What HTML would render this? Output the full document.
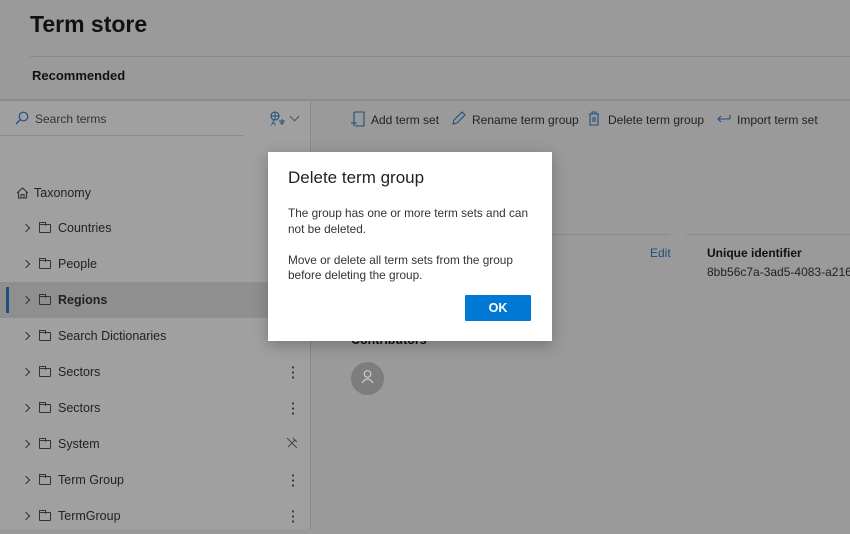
<!DOCTYPE html>
<html><head><style>
*{margin:0;padding:0;box-sizing:border-box}
body{width:850px;height:529px;overflow:hidden;background:#9a9a9a;font-family:"Liberation Sans",sans-serif;color:#1c1c1c;position:relative}
.a{position:absolute;white-space:nowrap}
.row{position:absolute;left:0;width:310px;height:36px;font-size:12.5px;color:#222}
.row .c{position:absolute;left:23px;top:15px;width:6px;height:6px;border-right:1.1px solid #333;border-top:1.1px solid #333;transform:rotate(45deg)}
.row .f{position:absolute;left:39px;top:14px;width:12px;height:9px;border:1.1px solid #333;border-radius:1px}
.row .f:before{content:"";position:absolute;left:-1px;top:-3px;width:5px;height:3px;border:1.1px solid #333;border-bottom:none}
.row .t{position:absolute;left:58px;top:11px}
.dots{position:absolute;left:292px;top:11px;width:2px;height:14px;background:radial-gradient(circle,#333 1px,transparent 1.2px) 0 0/2px 5px}
.tb{position:absolute;top:113px;font-size:12px;color:#222}
</style></head><body>
<div class="a" style="left:30px;top:11px;font-size:23px;font-weight:bold;color:#111">Term store</div>
<div class="a" style="left:30px;top:56px;width:820px;height:1px;background:#888"></div>
<div class="a" style="left:32px;top:68px;font-size:13px;font-weight:bold;color:#111">Recommended</div>
<div class="a" style="left:0;top:99px;width:850px;height:2px;background:#8c8c8c"></div>
<div class="a" style="left:0;top:101px;width:310px;height:428px;background:#a0a0a0"></div>
<div class="a" style="left:310px;top:101px;width:1px;height:428px;background:#8a8a8a"></div>
<svg class="a" style="left:15px;top:111px" width="14" height="14"><circle cx="8.5" cy="5.5" r="4.3" fill="none" stroke="#1e4f80" stroke-width="1.2"/><line x1="5.4" y1="8.6" x2="1" y2="13" stroke="#1e4f80" stroke-width="1.3"/></svg>
<div class="a" style="left:35px;top:112px;font-size:12px;color:#333">Search terms</div>
<svg class="a" style="left:270px;top:111px" width="16" height="15"><circle cx="5" cy="5" r="4" fill="none" stroke="#1e4f80" stroke-width="1.1"/><path d="M1 5 H9 M5 1 V9" stroke="#1e4f80" stroke-width="0.9"/><text x="1" y="14.5" font-size="7" font-family="Liberation Sans" fill="#1e4f80">A</text><path d="M9 10 H15 M12 8 V14 M10 12 H14" stroke="#1e4f80" stroke-width="1"/></svg>
<div class="a" style="left:291px;top:113px;width:7px;height:7px;border-right:1px solid #555;border-bottom:1px solid #555;transform:rotate(45deg)"></div>
<div class="a" style="left:0;top:135px;width:244px;height:1px;background:#8a8a8a"></div>
<svg class="a" style="left:16px;top:187px" width="13" height="12"><path d="M1 6 L6.5 1 L12 6 M2.5 5 V11 H10.5 V5 M5 11 V7.5 H8 V11" fill="none" stroke="#333" stroke-width="1.1"/></svg>
<div class="a" style="left:34px;top:186px;font-size:12.5px;color:#222">Taxonomy</div>
<div class="row" style="top:210px"><i class="c"></i><i class="f"></i><span class="t">Countries</span></div>
<div class="row" style="top:246px"><i class="c"></i><i class="f"></i><span class="t">People</span></div>
<div class="row" style="top:282px;background:#8f8f8f"><div style="position:absolute;left:6px;top:5px;width:3px;height:26px;background:#1e4f80"></div><i class="c"></i><i class="f"></i><span class="t" style="font-weight:bold">Regions</span></div>
<div class="row" style="top:318px"><i class="c"></i><i class="f"></i><span class="t">Search Dictionaries</span></div>
<div class="row" style="top:354px"><i class="c"></i><i class="f"></i><span class="t">Sectors</span><i class="dots"></i></div>
<div class="row" style="top:390px"><i class="c"></i><i class="f"></i><span class="t">Sectors</span><i class="dots"></i></div>
<div class="row" style="top:426px"><i class="c"></i><i class="f"></i><span class="t">System</span><svg style="position:absolute;left:286px;top:11px" width="12" height="12"><path d="M2 10 L9 3 M7 1 L11 5 M1 1 L11 11" stroke="#444" stroke-width="1" fill="none"/></svg></div>
<div class="row" style="top:462px"><i class="c"></i><i class="f"></i><span class="t">Term Group</span><i class="dots"></i></div>
<div class="row" style="top:498px"><i class="c"></i><i class="f"></i><span class="t">TermGroup</span><i class="dots"></i></div>

<svg class="a" style="left:350px;top:111px" width="15" height="16"><path d="M4 1 H14 V15 H5 M4 1 V9 M1 12 H7 M4 9 V15" fill="none" stroke="#1e4f80" stroke-width="1.1"/></svg>
<div class="tb" style="left:371px">Add term set</div>
<svg class="a" style="left:451px;top:111px" width="15" height="15"><path d="M2 13 L3 9 L11 1 L14 4 L6 12 Z" fill="none" stroke="#1e4f80" stroke-width="1.1"/></svg>
<div class="tb" style="left:472px">Rename term group</div>
<svg class="a" style="left:588px;top:111px" width="12" height="15"><path d="M1 3 H11 M4 3 V1 H8 V3 M2 3 V14 H10 V3 M5 6 V11 M7 6 V11" fill="none" stroke="#1e4f80" stroke-width="1.1"/></svg>
<div class="tb" style="left:608px">Delete term group</div>
<svg class="a" style="left:716px;top:114px" width="15" height="9"><path d="M14 5 H2 M5 2 L2 5 L5 8 M14 1 V5" fill="none" stroke="#1e4f80" stroke-width="1.1"/></svg>
<div class="tb" style="left:737px">Import term set</div>

<div class="a" style="left:540px;top:234px;width:130px;height:1px;background:#8a8a8a"></div>
<div class="a" style="left:686px;top:234px;width:164px;height:1px;background:#8a8a8a"></div>
<div class="a" style="left:650px;top:246px;font-size:12px;color:#1e4f80">Edit</div>
<div class="a" style="left:707px;top:246px;font-size:12px;font-weight:bold;color:#111">Unique identifier</div>
<div class="a" style="left:707px;top:265px;font-size:12px;color:#222">8bb56c7a-3ad5-4083-a216-</div>
<div class="a" style="left:351px;top:333px;font-size:12.5px;font-weight:bold;color:#111">Contributors</div>
<div class="a" style="left:351px;top:362px;width:33px;height:33px;border-radius:50%;background:#7d7d7d"></div>
<svg class="a" style="left:360px;top:369px" width="15" height="17"><circle cx="7.5" cy="5" r="3.3" fill="none" stroke="#ccc" stroke-width="1.2"/><path d="M2 14 Q7.5 6 13 14" fill="none" stroke="#ccc" stroke-width="1.2"/></svg>

<div class="a" style="left:268px;top:152px;width:284px;height:189px;background:#fff;box-shadow:0 4px 14px rgba(0,0,0,.25)">
<div class="a" style="left:20px;top:16px;font-size:17px;color:#222">Delete term group</div>
<div class="a" style="left:20px;top:54px;font-size:11.8px;color:#333;line-height:15.5px">The group has one or more term sets and can<br>not be deleted.<br><br>Move or delete all term sets from the group<br>before deleting the group.</div>
<div class="a" style="left:197px;top:143px;width:66px;height:26px;background:#0078d4;color:#fff;font-size:12.5px;font-weight:bold;text-align:center;line-height:26px;border-radius:1px">OK</div>
</div>
</body></html>
